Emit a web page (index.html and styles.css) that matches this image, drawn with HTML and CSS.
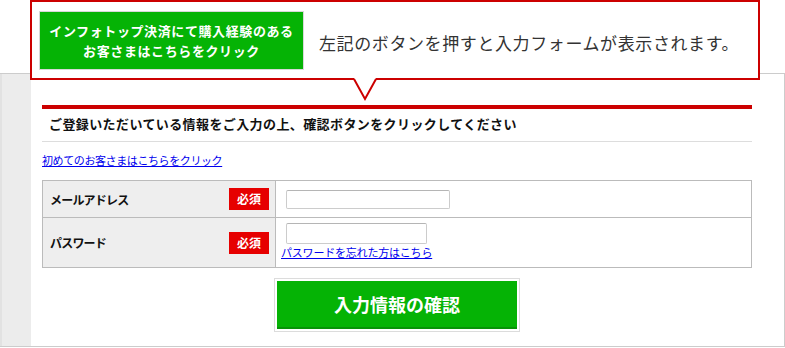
FILE: index.html
```html
<!DOCTYPE html>
<html lang="ja">
<head>
<meta charset="utf-8">
<link rel="stylesheet" href="styles.css">
</head>
<body>
<div class="page">
  <div class="callout">
    <a class="infotop-btn" href="#">
      <span>インフォトップ決済にて購入経験のある</span>
      <span>お客さまはこちらをクリック</span>
    </a>
    <p class="callout-text">左記のボタンを押すと入力フォームが表示されます。</p>
    <svg class="tail" width="24" height="24" viewBox="0 0 24 24">
      <polygon points="1,0 23,0 12,21" fill="#fff"/>
      <polyline points="1,1 12,21 23,1" fill="none" stroke="#cc0000" stroke-width="2"/>
    </svg>
  </div>
  <div class="box">
    <div class="side"></div>
    <div class="main">
      <div class="redbar"></div>
      <h2 class="heading">ご登録いただいている情報をご入力の上、確認ボタンをクリックしてください</h2>
      <a class="first-link" href="#">初めてのお客さまはこちらをクリック</a>
      <table class="form">
        <tr class="row1">
          <th><div class="label"><span>メールアドレス</span><span class="req">必須</span></div></th>
          <td class="val1"><input class="in1" type="text"></td>
        </tr>
        <tr class="row2">
          <th><div class="label"><span>パスワード</span><span class="req">必須</span></div></th>
          <td class="val2"><input class="in2" type="password"><a class="forgot" href="#">パスワードを忘れた方はこちら</a></td>
        </tr>
      </table>
      <div class="submit-wrap"><button class="submit" type="button">入力情報の確認</button></div>
    </div>
  </div>
</div>
</body>
</html>
```

FILE: styles.css
```css
* { box-sizing: border-box; }
html, body { margin: 0; padding: 0; background: #fff; }
body {
  width: 785px;
  height: 348px;
  overflow: hidden;
  font-family: "Noto Sans CJK JP", "Noto Sans", sans-serif;
  color: #111;
}
.page { width: 785px; }

.callout {
  position: relative;
  z-index: 2;
  margin-left: 30px;
  width: 730px;
  height: 80px;
  border: 2px solid #cc0000;
  background: #fff;
  display: flex;
  align-items: center;
  padding-left: 8px;
}
.infotop-btn {
  width: 263px;
  height: 57px;
  background: #05b305;
  box-shadow: 0 0 0 1px #d8d8d8;
  color: #fff;
  font-weight: bold;
  font-size: 13px;
  letter-spacing: 0.6px;
  line-height: 20px;
  text-decoration: none;
  display: flex;
  flex-direction: column;
  align-items: center;
  justify-content: center;
  margin-top: 1px;
}
.callout-text {
  margin: 0 0 0 16px;
  padding-top: 4px;
  font-size: 17px;
  letter-spacing: 0.6px;
  color: #333;
  white-space: nowrap;
}
.tail {
  position: absolute;
  left: 321px;
  top: 76px;
}

.box {
  margin-top: -7px;
  display: flex;
  border-top: 1px solid #cccccc;
  border-right: 1px solid #cccccc;
  border-bottom: 1px solid #cccccc;
  height: 274px;
}
.side {
  width: 31px;
  background: #ececec;
  border-left: 2px solid #e2e2e2;
}
.main {
  flex: 1;
  padding: 31px 32px 0 11px;
}
.redbar {
  height: 4px;
  background: #cc0000;
}
.heading {
  margin: 0;
  padding: 5px 0 7px 7px;
  font-size: 13px;
  line-height: 20px;
  letter-spacing: 0.4px;
  font-weight: bold;
  color: #111;
  border-bottom: 1px solid #dddddd;
}
.first-link {
  display: block;
  margin-top: 10px;
  font-size: 11px;
  line-height: 16px;
  letter-spacing: -0.4px;
  color: #0000ee;
}
.form {
  margin-top: 12px;
  width: 710px;
  border-collapse: collapse;
}
.form th, .form td {
  border: 1px solid #bbbbbb;
}
.form th {
  width: 233px;
  background: #eeeeee;
  padding: 0 6px 0 7px;
  vertical-align: middle;
  text-align: left;
}
.label {
  display: flex;
  align-items: center;
  justify-content: space-between;
  font-size: 12px;
  font-weight: bold;
  letter-spacing: -0.8px;
  color: #111;
}
.req {
  width: 40px;
  height: 22px;
  line-height: 22px;
  text-align: center;
  background: #e60000;
  color: #fff;
  font-size: 12px;
  letter-spacing: 0;
}
.val1 { padding: 9px 10px 8px 10px; }
.val2 { padding: 5px 10px 7px 5px; }
.form input {
  display: block;
  border: 1px solid #cccccc;
  border-top-color: #b5b5b5;
  border-radius: 2px;
  background: #fff;
  padding: 0;
  margin: 0;
}
.in1 { width: 164px; height: 19px; }
.in2 { width: 141px; height: 21px; margin-left: 5px !important; }
.forgot {
  display: block;
  font-size: 11px;
  line-height: 16px;
  letter-spacing: -0.2px;
  color: #0000ee;
}
.submit-wrap {
  display: flex;
  justify-content: center;
  margin-top: 13px;
}
.submit {
  width: 240px;
  height: 48px;
  background: #05b305;
  border: none;
  border-bottom: 2px solid #079307;
  box-shadow: 0 0 0 2px #fff, 0 0 0 3px #dcdcdc;
  color: #fff;
  font-family: "Noto Sans CJK JP", sans-serif;
  font-size: 18px;
  font-weight: bold;
  padding: 0;
}
```
